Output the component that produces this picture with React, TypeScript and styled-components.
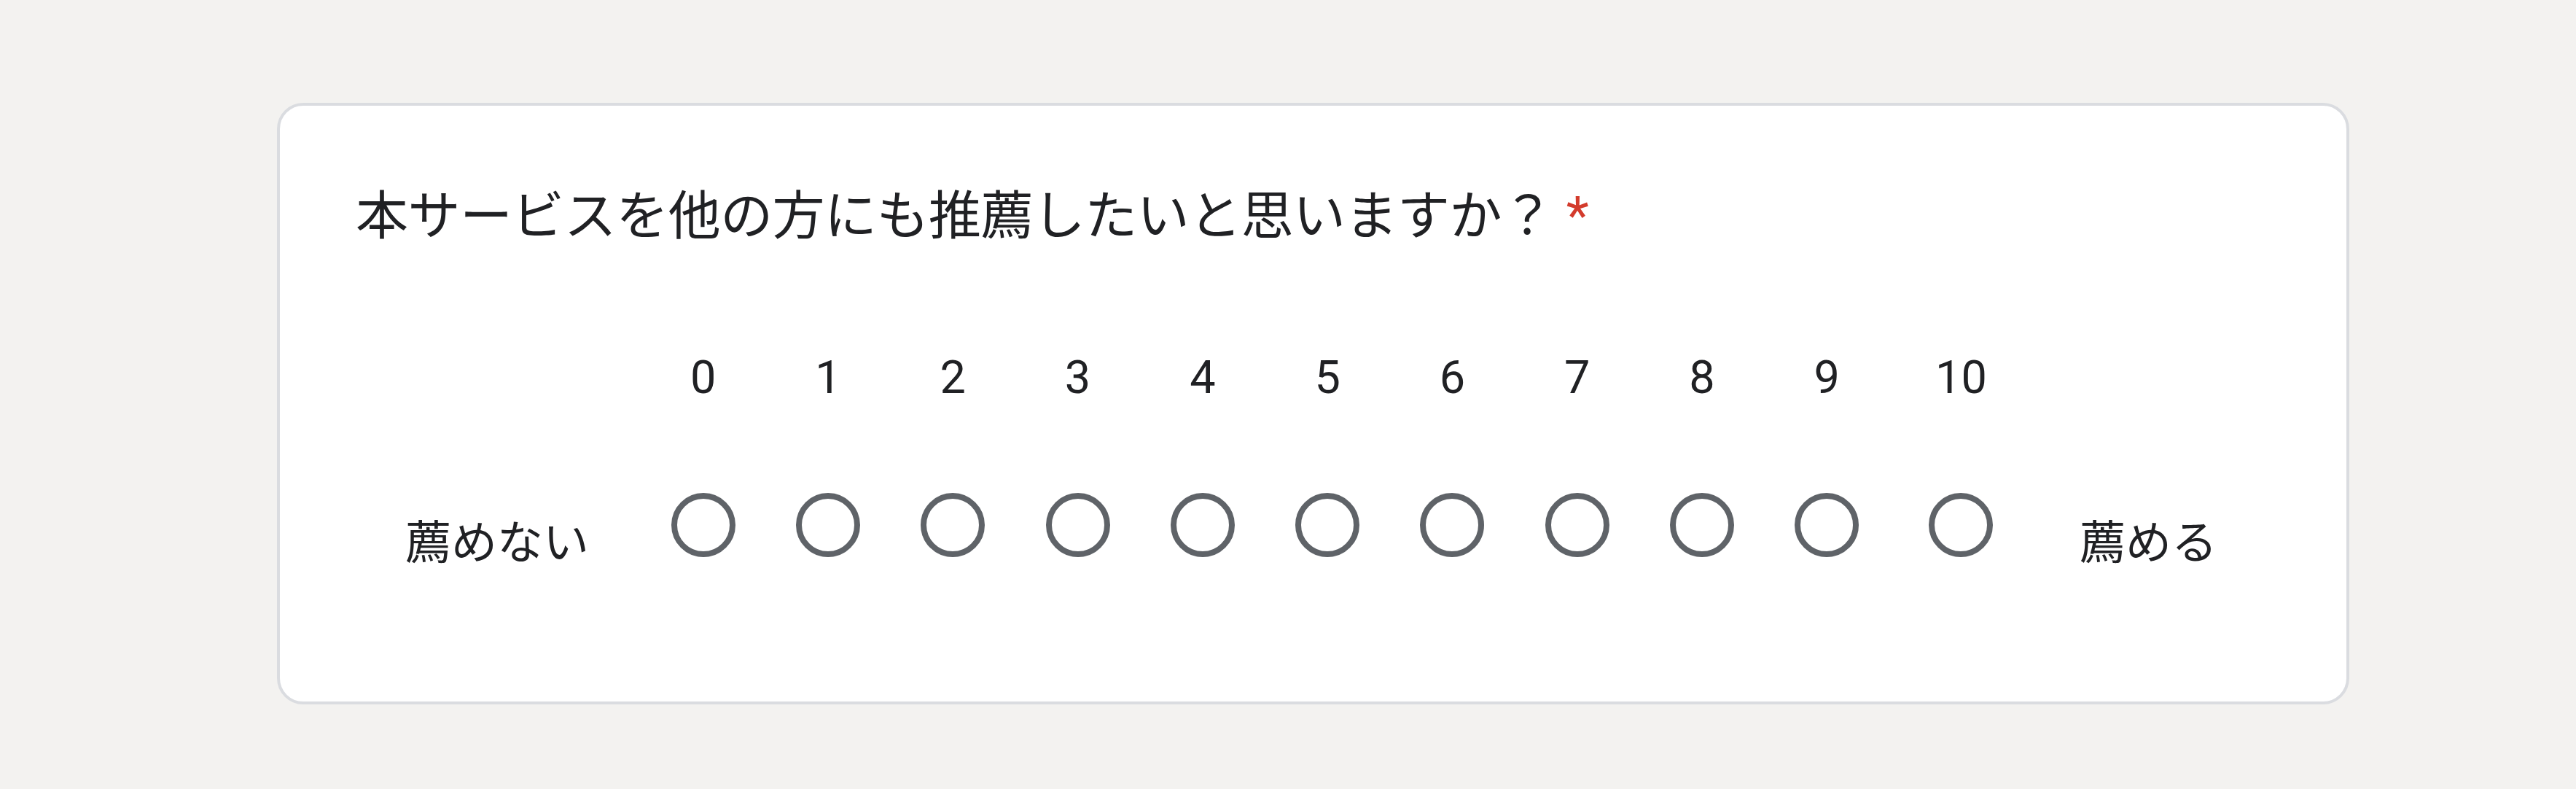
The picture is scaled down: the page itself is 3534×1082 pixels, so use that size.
import React from "react";
import styled, { createGlobalStyle } from "styled-components";

const GlobalStyle = createGlobalStyle`
  html, body {
    margin: 0;
    padding: 0;
    background: #f3f2f0;
  }
  body {
    font-family: Roboto, "Noto Sans CJK JP", "Noto Sans", sans-serif;
    color: #202124;
  }
`;

const Page = styled.div`
  box-sizing: border-box;
  width: 3534px;
  height: 1082px;
  padding: 141px 0 0 380px;
  background: #f3f2f0;
`;

const Card = styled.section`
  box-sizing: border-box;
  width: 2843px;
  height: 825px;
  background: #ffffff;
  border: 4px solid #dadce0;
  border-radius: 36px;
  padding: 104px 100px 0 100px;
`;

const Title = styled.h2`
  margin: 0;
  padding-left: 4px;
  font-family: Roboto, "Noto Sans CJK JP", sans-serif;
  font-weight: 400;
  font-size: 72px;
  line-height: 96px;
  color: #202124;
  letter-spacing: -0.55px;
`;

const Required = styled.span`
  color: #d33b2c;
`;

const Scale = styled.div`
  display: flex;
  align-items: flex-end;
  margin-top: 137px;
`;

const EndLabel = styled.div<{ $side: "start" | "end" }>`
  padding: ${(p) => (p.$side === "start" ? "0 71px 0 72px" : "0 0 0 64px")};
  font-size: 63px;
  line-height: 72px;
  color: #202124;
  white-space: nowrap;
`;

const Options = styled.div`
  display: flex;
`;

const Option = styled.label<{ $wide?: boolean }>`
  width: ${(p) => (p.$wide ? "197px" : "171.3px")};
  display: flex;
  flex-direction: column;
  align-items: center;
  padding-bottom: 17px;
`;

const Value = styled.span`
  font-size: 63px;
  line-height: 72px;
  color: #202124;
`;

const Radio = styled.span`
  box-sizing: border-box;
  margin-top: 122px;
  width: 88px;
  height: 88px;
  border-radius: 50%;
  border: 8px solid #5f6368;
`;

const values = [0, 1, 2, 3, 4, 5, 6, 7, 8, 9, 10];

export default function App() {
  return (
    <>
      <GlobalStyle />
      <Page>
        <Card>
          <Title>
            本サービスを他の方にも推薦したいと思いますか？ <Required>*</Required>
          </Title>
          <Scale>
            <EndLabel $side="start">薦めない</EndLabel>
            <Options>
              {values.map((v) => (
                <Option key={v} $wide={v >= 10}>
                  <Value>{v}</Value>
                  <Radio />
                </Option>
              ))}
            </Options>
            <EndLabel $side="end">薦める</EndLabel>
          </Scale>
        </Card>
      </Page>
    </>
  );
}
